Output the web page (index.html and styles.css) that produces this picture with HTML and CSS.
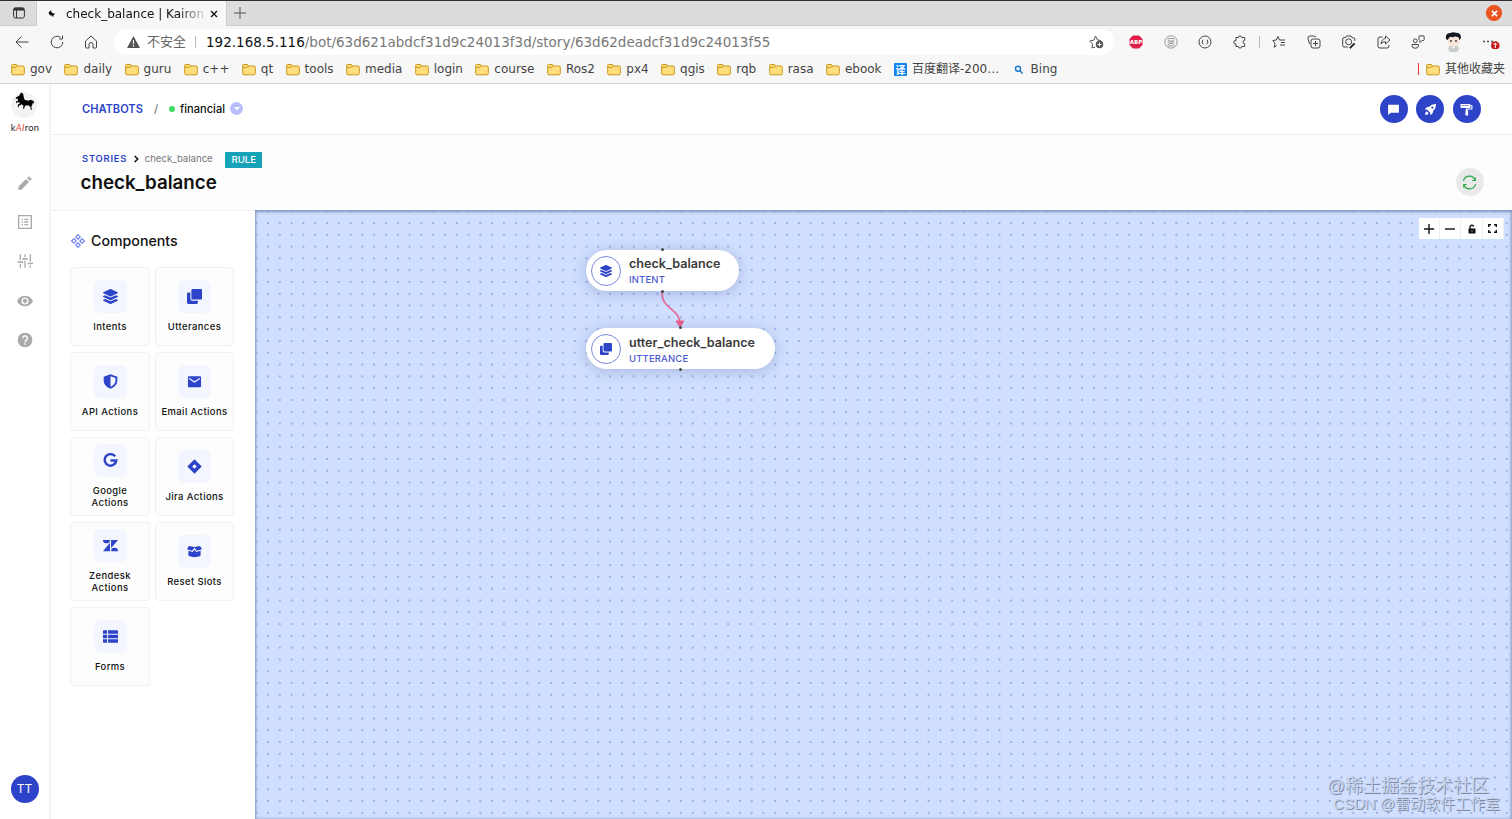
FILE: index.html
```html
<!DOCTYPE html>
<html lang="en">
  <head>
    <meta charset="UTF-8" />
    <meta name="viewport" content="width=device-width, initial-scale=1.0" />
    <title>check_balance | Kairon</title>
    <link rel="stylesheet" href="styles.css">
  </head>
  <body>
    <svg class="sprite">
      <symbol id="folder" viewBox="0 0 14 13">
        <path d="M1.5 1.5h4l1 1.5h5.5a1.3 1.3 0 0 1 1.3 1.3v6.2a1.3 1.3 0 0 1-1.3 1.3H2A1.3 1.3 0 0 1 .7 10.500V2.300a.8.8 0 0 1 .8-.8z" fill="#ffdf7d" stroke="#c9981a" />
        <path d="M1 4.300h4.300l1.300-1.300" fill="none" stroke="#c9981a" />
      </symbol>
      <symbol id="layers" viewBox="0 0 512 512">
        <path d="M12.400 148l232 105.700c6.800 3.100 16.400 3.100 23.200 0l232-105.700c16.500-7.500 16.500-32.600 0-40.100L267.600 2.300c-6.800-3.100-16.400-3.100-23.200 0L12.400 107.900c-16.500 7.500-16.500 32.600 0 40.100zM499.600 236.300l-58-26.300-161 73c-15 7-34 7-49.200 0L70.500 210l-58 26.300c-16.500 7.500-16.500 32.500 0 40l232 105.200c6.800 3.100 16.400 3.100 23.200 0l232-105.200c16.400-7.500 16.400-32.500 0-40zM499.600 364.100l-58-26.300-161 73c-15 7-34 7-49.200 0L70.500 338l-58 26.300c-16.500 7.500-16.500 32.500 0 40l232 105.200c6.800 3.100 16.400 3.100 23.200 0l232-105.200c16.400-7.500 16.400-32.500 0-40z" />
      </symbol>
      <symbol id="clone" viewBox="0 0 16 16">
        <rect x="4.700" y="0" width="11.300" height="11.300" rx="1.300" />
        <path d="M3.600 3.800H1.500A1.500 1.500 0 0 0 0 5.300v9.200A1.500 1.500 0 0 0 1.500 16h8.700a1.500 1.500 0 0 0 1.500-1.500v-2H5.500a1.900 1.900 0 0 1-1.900-1.900z" />
      </symbol>
    </svg>

    <div class="tabs">
      <div class="tab-menu">
        <svg width="12" height="12" viewBox="0 0 12 12" fill="none" stroke="#333"><rect x=".6" y=".8" width="10.800" height="10.200" rx="1.800" /><path d="M1 2.300h10" stroke-width="2.500" /><path d="M3.500 3v8" /></svg>
      </div>
      <div class="tab">
        <svg width="10" height="10" viewBox="0 0 10 10"><path d="M1.500 3.500L4 1.200l.8 2.600L8.500 5l-1.800.8L6 8.200 4.800 6.500 2.800 6.200z" fill="#111" /></svg>
        <span class="tab-title">check_balance | Kairon</span>
        <svg width="8" height="8" viewBox="0 0 8 8" stroke="#111" stroke-width="1.300"><path d="M1 1l6 6M7 1L1 7" /></svg>
      </div>
      <div class="tab-new">
        <svg width="12" height="12" viewBox="0 0 12 12" stroke="#555"><path d="M6 0v12M0 6h12" /></svg>
      </div>
      <div class="window-close">
        <svg width="7" height="7" viewBox="0 0 8 8" stroke="#fff" stroke-width="2"><path d="M1 1l6 6M7 1L1 7" /></svg>
      </div>
    </div>

    <div class="toolbar">
      <div class="nav-icons">
        <svg width="14" height="14" viewBox="0 0 14 14"><path d="M13.500 7H1M6.500 1.500L1 7l5.500 5.500" /></svg>
        <svg width="14" height="14" viewBox="0 0 14 14"><path d="M12.800 7A5.800 5.800 0 1 1 10.500 2.400M12.500.5v3.500H9" /></svg>
        <svg width="14" height="14" viewBox="0 0 14 14"><path d="M1.500 6L7 1l5.500 5v6.200a.8.8 0 0 1-.8.8H9V9.500a2 2 0 0 0-4 0V13H2.300a.8.8 0 0 1-.8-.8z" /></svg>
      </div>
      <div class="address">
        <svg width="13" height="12" viewBox="0 0 13 12"><path d="M6.500 0L13 12H0z" fill="#555" /><path d="M6.500 4v4M6.500 9v1.500" stroke="#fff" stroke-width="1.200" /></svg>
        <span class="insecure">不安全</span>
        <span class="divider"></span>
        <span class="url"><b>192.168.5.116</b>/bot/63d621abdcf31d9c24013f3d/story/63d62deadcf31d9c24013f55</span>
        <svg width="15" height="14" viewBox="0 0 15 14"><path d="M6 12l-3 1 .5-4L.8 6l4-.8L6.500 1l2 4 3.500.5" fill="none" stroke="#555" /><circle cx="10.500" cy="9.500" r="3.700" fill="#555" /><path d="M10.500 7.500v4M8.500 9.500h4" stroke="#fff" /></svg>
      </div>
      <div class="extensions">
        <svg width="14" height="14" viewBox="0 0 14 14"><path d="M4 .5h6L13.500 4v6L10 13.500H4L.5 10V4z" fill="#e01e4c" stroke="none" /><text x="7" y="9" class="abp">ABP</text></svg>
        <svg width="14" height="14" viewBox="0 0 14 14" class="faint"><circle cx="7" cy="7" r="6.200" /><path d="M3.500 4.500l2 1.500h3l2-1.500M3.500 10l2-1.500h3l2 1.500M3.500 7h7M4 3.500h6M4 11h6" /></svg>
        <svg width="14" height="14" viewBox="0 0 14 14"><circle cx="7" cy="7" r="6" /><path d="M5.300 4.800Q4.300 5 4.500 6T3.800 7Q4.500 7.200 4.500 8t.8 1.200M8.700 4.800q1 .2.800 1.200t.7 1q-.7.200-.7 1t-.8 1.200" /></svg>
        <svg width="14" height="14" viewBox="0 0 14 14"><path d="M3 2.500h2.500a1.600 1.600 0 0 1 3.200 0h3v2.800a1.700 1.700 0 1 0 0 3.400v2.800h-3a1.600 1.600 0 0 1-3.200 0H3V9a1.800 1.800 0 1 1 0-3.500z" /></svg>
        <span class="divider"></span>
        <svg width="14" height="14" viewBox="0 0 14 14"><path d="M4.500 10.500l-2.200 1.800.7-4L.8 5.500l3.500-.5L6 1.500 7.500 5H13M9 7.500h4M8 10h5" /></svg>
        <svg width="14" height="14" viewBox="0 0 14 14"><rect x="4" y="4" width="9" height="9" rx="2" /><path d="M8.500 6v5M6 8.500h5M2.500 9L1 3.500A2 2 0 0 1 2.500 1L7 1l2 1" /></svg>
        <svg width="14" height="14" viewBox="0 0 14 14"><path d="M6 12H2a1.300 1.300 0 0 1-1.300-1.300V4A1.300 1.300 0 0 1 2 2.700h1.500l1-1.700h4.500l1 1.700h1.500A1.300 1.300 0 0 1 12.800 4v2" /><circle cx="6.700" cy="6.800" r="3" /><path d="M7.500 12.500L12 8l1 1-4.500 4.500z" fill="#333" /></svg>
        <svg width="14" height="14" viewBox="0 0 14 14"><path d="M5.500 2H3a2 2 0 0 0-2 2v7a2 2 0 0 0 2 2h7a2 2 0 0 0 2-2v-1M8.500 1l4.500 4-4.500 4V6.700Q5.500 6.500 4 9q.5-5 4.500-5.500z" /></svg>
        <svg width="14" height="14" viewBox="0 0 14 14"><circle cx="4.300" cy="5.800" r="1.900" /><path d="M1 9.500h6.500v1.200a3.200 2.500 0 0 1-6.500 0zM8 1.500A1 1 0 0 1 9 .8h3a1.200 1.200 0 0 1 1.200 1.200v2.500a1 1 0 0 1-1 1H11L9 7.500V5.500L8 4.500z" /></svg>
        <svg class="avatar" width="17" height="20" viewBox="0 0 17 20" stroke="none"><path d="M4 14q4.500-3 9 0l1 3-2 3H5l-2-3z" fill="#c9cfc9" /><ellipse cx="8.500" cy="9" rx="5.800" ry="5.500" fill="#f9e5d7" /><path d="M1 7Q0 1 5.500 1 8-.5 11 .8q5 0 5 5l-1.500 2.500-1-3-3.500-.8-2 .8-3-.5L2.500 8z" fill="#151820" /><circle cx="6" cy="9" r=".9" fill="#333" /><circle cx="11" cy="9" r=".9" fill="#333" /><path d="M7 15l1.500 2 1.500-2" fill="#fff" /></svg>
        <svg class="more" width="18" height="14" viewBox="0 0 18 14" stroke="none"><g fill="#333"><circle cx="2" cy="6.500" r=".9" /><circle cx="6" cy="6.500" r=".9" /><circle cx="10" cy="6.500" r=".9" /></g><circle cx="13.300" cy="10.500" r="4.300" fill="#c4191b" /><path d="M13.300 13V8M11.500 9.800L13.300 8l1.800 1.800" stroke="#fff" fill="none" /></svg>
      </div>
    </div>

    <div class="bookmarks">
      <span><svg><use href="#folder" /></svg>gov</span>
      <span><svg><use href="#folder" /></svg>daily</span>
      <span><svg><use href="#folder" /></svg>guru</span>
      <span><svg><use href="#folder" /></svg>c++</span>
      <span><svg><use href="#folder" /></svg>qt</span>
      <span><svg><use href="#folder" /></svg>tools</span>
      <span><svg><use href="#folder" /></svg>media</span>
      <span><svg><use href="#folder" /></svg>login</span>
      <span><svg><use href="#folder" /></svg>course</span>
      <span><svg><use href="#folder" /></svg>Ros2</span>
      <span><svg><use href="#folder" /></svg>px4</span>
      <span><svg><use href="#folder" /></svg>qgis</span>
      <span><svg><use href="#folder" /></svg>rqb</span>
      <span><svg><use href="#folder" /></svg>rasa</span>
      <span><svg><use href="#folder" /></svg>ebook</span>
      <span class="cjk"><i class="translate">译</i>百度翻译-200…</span>
      <span><svg viewBox="0 0 14 13" fill="none" stroke="#1b74c8" stroke-width="1.400"><circle cx="6" cy="5.800" r="2.500" /><path d="M8 7.800l2.600 2.600" /></svg>Bing</span>
      <span class="cjk other"><svg><use href="#folder" /></svg>其他收藏夹</span>
    </div>

    <div class="app">
      <aside class="sidebar">
        <div class="logo">
          <div class="logo-mark">
            <svg width="20" height="20" viewBox="0 0 22 22"><path d="M5 3.500L6.500.500 9 2l.5 3 1 3.500 4 1 2.500-1 3.500 1.500.5 3.500-1.500-2-.5 2.500-1 2 .5 3.500h-1.200l-.3-3-2.500-2-3.500.5-1 3.500h-1.200l.5-3.500-2-1.500-3 1.500-.3 2L3 16l.5-2.500 2.500-1.500-3-1-1.800 1.500L1 10.500l2.500-1L2.500 7 .8 8 1 6l3-1.500z" /></svg>
          </div>
          <div class="logo-name">k<em>AI</em>ron</div>
        </div>
        <nav class="menu">
          <svg viewBox="0 0 24 24"><path d="M2 17.500V22h4.500L18 10.500 13.500 6zM21.500 7a1.200 1.200 0 0 0 0-1.600l-2.900-2.900a1.200 1.200 0 0 0-1.600 0l-2 2L19.500 9z" /></svg>
          <svg viewBox="0 0 24 24"><path d="M2.500 2.500h19v19h-19z" fill="none" stroke="#aaa" stroke-width="2" /><path d="M7 7h2v2H7zM7 11h2v2H7zM7 15h2v2H7zM11 7h6v2h-6zM11 11h6v2h-6zM11 15h6v2h-6z" /></svg>
          <svg viewBox="0 0 24 24"><path d="M4 2h2v9H4zM1 12.500h8v2.500H1zM4 16.500h2V22H4zM11 2h2v4h-2zM8 7.500h8V10H8zM11 11.500h2V22h-2zM19 2h2v11h-2zM16 14.500h8V17h-8zM19 18.500h2V22h-2z" /></svg>
          <svg viewBox="0 0 24 24"><path fill-rule="evenodd" d="M12 4C6.500 4 2 7.200 0 12c2 4.800 6.500 8 12 8s10-3.200 12-8c-2-4.800-6.500-8-12-8zM12 17.300a5.300 5.300 0 1 1 0-10.600 5.300 5.300 0 0 1 0 10.600zm0-8.500a3.200 3.200 0 1 0 0 6.400 3.200 3.200 0 0 0 0-6.400z" /></svg>
          <svg viewBox="0 0 24 24"><circle cx="12" cy="12" r="11" /><path d="M8.500 9.500a3.500 3.500 0 1 1 5.500 2.700Q12 13.500 12 15.300M12 17v2.200" fill="none" stroke="#fff" stroke-width="2.200" /></svg>
        </nav>
        <div class="user">TT</div>
      </aside>

      <main>
        <header class="topbar">
          <a class="crumb-root">CHATBOTS</a>
          <span class="slash">/</span>
          <span class="status"></span>
          <span class="bot-name">financial</span>
          <span class="dropdown"><svg width="6" height="4" viewBox="0 0 6 4"><path d="M0 0h6L3 3.500z" fill="#fff" /></svg></span>
          <div class="actions">
            <button><svg viewBox="0 0 24 24"><path d="M2 3h20v15H7l-5 4z" /></svg></button>
            <button><svg viewBox="0 0 24 24"><path fill-rule="evenodd" d="M22 2q-8-.5-12.500 5L5 8l-3.500 4 4.500.5 5.500 5.500.5 4.500 4-3.500 1-4.500Q22.500 10 22 2zM15.500 6.500a2 2 0 1 1 0 4 2 2 0 0 1 0-4zM4.500 15Q2 17 2 22q5 0 7-2.500z" /></svg></button>
            <button><svg viewBox="0 0 24 24"><path fill-rule="evenodd" d="M1 2h18v2h4v8h-9v2h1v9h-5v-9h1v-4h10V6h-2v3H1zM3 4v1h14V4z" /></svg></button>
          </div>
        </header>

        <section class="story-head">
          <div class="story-title">
            <div class="path">
              <a>STORIES</a>
              <svg width="5" height="8" viewBox="0 0 5 8" fill="none" stroke="#111" stroke-width="1.500"><path d="M.7 1l3 3-3 3" /></svg>
              <span>check_balance</span>
              <b class="badge">RULE</b>
            </div>
            <h1>check_balance</h1>
          </div>
          <button class="refresh">
            <svg width="15" height="15" viewBox="0 0 15 15" fill="none" stroke="#28a745" stroke-width="1.200"><path d="M1.500 6A6 6 0 0 1 13 5M13.500 9A6 6 0 0 1 2 10M13.300 2.500V5.500h-3M1.700 12.500v-3h3" /></svg>
          </button>
        </section>

        <div class="builder">
          <section class="components">
            <h2>
              <svg width="14" height="14" viewBox="0 0 14 14" fill="none" stroke="#6b78ee" stroke-width="1.100"><path d="M7 .6l2.300 2.300L7 5.200 4.700 2.900zM7 8.800l2.300 2.300L7 13.400l-2.300-2.300zM2.900 4.700L5.200 7 2.900 9.300.6 7zM11.100 4.700L13.400 7l-2.300 2.300L8.800 7z" /></svg>
              Components
            </h2>
            <div class="cards">
              <div class="card"><i><svg><use href="#layers" /></svg></i>Intents</div>
              <div class="card"><i><svg><use href="#clone" /></svg></i>Utterances</div>
              <div class="card"><i><svg viewBox="0 0 16 16"><path fill-rule="evenodd" d="M8 .3L15.300 3v4q0 6-7.300 8.800Q.7 13 .7 7V3zM8 2.300v11.300q5.300-2.400 5.300-6.600V4.300z" /></svg></i>API Actions</div>
              <div class="card"><i><svg viewBox="0 0 16 16"><path fill-rule="evenodd" d="M2 2.500h12a1 1 0 0 1 1 1v9.500a1 1 0 0 1-1 1H2a1 1 0 0 1-1-1V3.500a1 1 0 0 1 1-1zM2.300 4v1.500L8 9.200l5.700-3.700V4L8 7.700z" /></svg></i>Email Actions</div>
              <div class="card two-line"><i><svg viewBox="0 0 16 16"><path d="M13 3.600A6.200 6.200 0 1 0 14.200 8H8" fill="none" stroke="#2d43c8" stroke-width="2.500" /></svg></i>Google Actions</div>
              <div class="card"><i><svg viewBox="0 0 16 16"><path fill-rule="evenodd" d="M8 .3L15.700 8 8 15.700.3 8zM8 5.500L5.500 8 8 10.500 10.500 8z" /></svg></i>Jira Actions</div>
              <div class="card two-line"><i><svg viewBox="0 0 16 16"><path d="M0 2h7.400a3.700 3.700 0 0 1-7.400 0zM7.400 5v9H0zM8.600 14a3.700 3.700 0 0 1 7.400 0zM8.600 11V2H16z" /></svg></i>Zendesk Actions</div>
              <div class="card"><i><svg viewBox="0 0 16 16"><path d="M2 2.200l6 .9 6-.9 2 3.500-5.500 1.600L8 4 5.500 7.300 0 5.700zM1.500 7.300l4.600 1.300L8 6l1.900 2.600 4.600-1.300v4.500q0 1-1 1.300L8 14.200l-5.500-1.100q-1-.3-1-1.300z" /></svg></i>Reset Slots</div>
              <div class="card"><i><svg viewBox="0 0 16 16"><path d="M1 1.300h3.300v3.800H0V2.300a1 1 0 0 1 1-1zM5.400 1.300H15a1 1 0 0 1 1 1v2.800H5.400zM0 6.200h4.300v3.600H0zM5.400 6.200H16v3.600H5.400zM0 10.900h4.300v3.800H1a1 1 0 0 1-1-1zM5.400 10.900H16v2.800a1 1 0 0 1-1 1H5.400z" /></svg></i>Forms</div>
            </div>
          </section>

          <section class="canvas">
            <svg class="edge" width="30" height="40" viewBox="0 0 30 40"><path d="M4 2C4 19 22 17 22 33" fill="none" stroke="#ec6a9c" stroke-width="1.700" /><path d="M18 30h8l-4 6z" fill="#ec5f8f" stroke="#ec5f8f" /></svg>
            <div class="node intent">
              <i><svg><use href="#layers" /></svg></i>
              <div><strong>check_balance</strong><small>INTENT</small></div>
            </div>
            <div class="node utterance">
              <i><svg><use href="#clone" /></svg></i>
              <div><strong>utter_check_balance</strong><small>UTTERANCE</small></div>
            </div>
            <div class="controls">
              <span><svg width="10" height="10" viewBox="0 0 10 10"><path d="M5 0v10M0 5h10" /></svg></span>
              <span><svg width="10" height="10" viewBox="0 0 10 10"><path d="M0 5h10" /></svg></span>
              <span><svg width="8" height="10" viewBox="0 0 8 10"><rect x=".5" y="4.500" width="7" height="5" rx=".5" fill="#111" stroke="none" /><path d="M2 5V3a2 2 0 0 1 3.800-.6" /><circle cx="4" cy="7" r=".6" fill="#fff" stroke="none" /></svg></span>
              <span><svg width="9" height="9" viewBox="0 0 9 9"><path d="M.7 3V.7H3M6 .7h2.300V3M8.300 6v2.300H6M3 8.300H.7V6" /></svg></span>
            </div>
            <div class="watermark">
              <p class="community">@稀土掘金技术社区</p>
              <p class="author">CSDN @雷动软件工作室</p>
            </div>
          </section>
        </div>
      </main>
    </div>
  </body>
</html>
```
FILE: styles.css
```css
* {
  box-sizing: border-box;
}
body {
  margin: 0;
  height: 819px;
  overflow: hidden;
  display: flex;
  flex-direction: column;
  font-family: Inter, "Noto Sans CJK SC", sans-serif;
  background: #fff;
  color: #111;
}
svg {
  display: block;
  flex: none;
}
button {
  border: none;
  padding: 0;
  display: flex;
  align-items: center;
  justify-content: center;
}
.sprite {
  display: none;
}

/* browser frame */
.tabs,
.toolbar,
.bookmarks {
  font-family: "DejaVu Sans", "Noto Sans CJK SC", sans-serif;
  font-size: 12px;
  flex: none;
  display: flex;
  align-items: center;
  background: #f7f7f7;
}
.tabs {
  height: 26px;
  background: #dcdcdc;
  border-top: 1px solid #352c33;
}
.tab-menu {
  width: 37px;
  padding-left: 13px;
  height: 25px;
  display: flex;
  align-items: center;
  border-right: 1px solid #cdcdcd;
  border-bottom: 1px solid #cdcdcd;
}
.tab {
  width: 189px;
  height: 25px;
  padding-left: 10px;
  background: #f7f7f7;
  display: flex;
  align-items: center;
}
.tab-title {
  width: 137px;
  margin: 0 7px 0 9px;
  overflow: hidden;
  white-space: nowrap;
  mask-image: linear-gradient(90deg, #000 112px, rgba(0, 0, 0, 0.2));
}
.tab-new {
  flex: 1;
  height: 25px;
  padding-left: 7px;
  display: flex;
  align-items: center;
  border-left: 1px solid #cdcdcd;
  border-bottom: 1px solid #cdcdcd;
}
.window-close {
  width: 27px;
  height: 25px;
  border-bottom: 1px solid #cdcdcd;
  background: radial-gradient(circle at 9px 12px, #e95420 7.500px, transparent 8.500px);
  padding: 9px 0 0 5.500px;
}
.toolbar {
  height: 32px;
}
.nav-icons {
  width: 114px;
  padding-left: 15px;
  display: flex;
  gap: 20.500px;
  fill: none;
  stroke: #444;
}
.address {
  width: 1000px;
  height: 26px;
  padding: 0 10px 0 13px;
  border-radius: 13px;
  background: #fff;
  display: flex;
  align-items: center;
}
.insecure {
  margin: -3px 0 0 7px;
  width: 40px;
  font-size: 13px;
  color: #666;
}
.divider {
  width: 1px;
  height: 12px;
  margin: 0 10px 0 8px;
  background: #bbb;
}
.url {
  flex: 1;
  font-size: 13.500px;
  color: #777;
}
.url b {
  font-weight: normal;
  color: #111;
}
.extensions {
  flex: 1;
  padding-left: 15px;
  display: flex;
  align-items: center;
  gap: 20.700px;
  fill: none;
  stroke: #444;
}
.extensions .divider {
  margin: 0 -8.500px;
}
.extensions .faint {
  stroke: #999;
}
.extensions .avatar {
  margin: 0 -1px 0 -1px;
}
.abp {
  font: bold 5.500px "DejaVu Sans", sans-serif;
  text-anchor: middle;
  fill: #fff;
  stroke: none;
}
.bookmarks {
  height: 26px;
  padding: 0 7px 3px 11px;
  gap: 12.400px;
  border-bottom: 1px solid #d2d2d2;
  color: #444;
}
.bookmarks span {
  display: flex;
  align-items: center;
  gap: 5px;
  white-space: nowrap;
}
.bookmarks svg {
  width: 14px;
  height: 13px;
}
.bookmarks .cjk {
  line-height: 14px;
}
.bookmarks .other {
  margin-left: auto;
  padding-left: 8px;
  background: linear-gradient(#e33, #e33) left / 1px 12px no-repeat;
}
.translate {
  width: 13px;
  height: 13px;
  border-radius: 1px;
  background: #1384f0;
  color: #fff;
  font: bold 10px/13px "Noto Sans CJK SC", sans-serif;
  text-align: center;
}

/* sidebar */
.app {
  flex: 1;
  min-height: 0;
  display: flex;
}
.sidebar {
  width: 51px;
  border-right: 2px solid #f4f4f5;
  display: flex;
  flex-direction: column;
  align-items: center;
  padding: 8px 0 16px;
}
.logo-mark {
  width: 26px;
  height: 26px;
  margin: 0 auto;
  border-radius: 50%;
  background: #f3f3f5;
}
.logo-mark svg {
  margin-left: 4px;
}
.logo-name {
  margin-top: 4px;
  padding-left: 1px;
  font: 9.300px/11px Lato, sans-serif;
  letter-spacing: 0.300px;
  color: #222;
}
.logo-name em {
  color: #e0492f;
}
.menu {
  margin-top: 41.500px;
  display: flex;
  flex-direction: column;
  gap: 23.400px;
}
.menu svg {
  width: 16px;
  height: 16px;
  fill: #aaa;
}
.user {
  margin-top: auto;
  width: 28px;
  height: 28px;
  border-radius: 50%;
  background: #2d43c8;
  color: #fff;
  font-size: 12px;
  line-height: 28px;
  text-align: center;
}

/* header */
main {
  flex: 1;
  min-width: 0;
  display: flex;
  flex-direction: column;
}
.topbar {
  height: 51px;
  padding: 0 31.500px 0 31px;
  border-bottom: 1px solid #eee;
  display: flex;
  align-items: center;
  font-size: 11.100px;
  line-height: 14px;
  font-weight: 500;
}
.crumb-root {
  font-weight: 600;
  color: #2d43c8;
}
.crumb-root,
.bot-name {
  margin-top: -1px;
}
.slash {
  margin: 0 11px;
  color: #777;
}
.status {
  width: 6px;
  height: 6px;
  margin-right: 5px;
  border-radius: 50%;
  background: #3ddc63;
}
.dropdown {
  width: 13px;
  height: 13px;
  margin: -1px 0 0 5px;
  border-radius: 50%;
  background: #b9bdfb;
  display: flex;
  align-items: center;
  justify-content: center;
}
.actions {
  margin-left: auto;
  display: flex;
  gap: 8.300px;
}
.actions button {
  width: 28px;
  height: 28px;
  border-radius: 50%;
  background: #2d43c8;
}
.actions svg {
  width: 13px;
  height: 13px;
  fill: #fff;
}
.story-head {
  height: 75px;
  padding: 16px 28.500px 0 29.500px;
  background: #fdfdfd;
  display: flex;
  justify-content: space-between;
}
.path {
  height: 16px;
  padding-left: 1.500px;
  display: flex;
  align-items: center;
  font-size: 9.600px;
  line-height: 14px;
  color: #777;
}
.path a {
  font-size: 9.450px;
  font-weight: 600;
  letter-spacing: 0.750px;
  color: #2d43c8;
}
.path a,
.path span {
  margin-top: -1px;
}
.path svg {
  margin: 0 6px 0 6.500px;
}
.badge {
  margin: 2px 0 0 12.500px;
  width: 37px;
  height: 16px;
  border-radius: 1px;
  background: #17a2b8;
  color: #fff;
  font-weight: 500;
  line-height: 16px;
  text-align: center;
}
.story-head h1 {
  margin: 3.500px 0 0;
  font-size: 18.750px;
  line-height: 24px;
  font-weight: 600;
}
.refresh {
  width: 28px;
  height: 28px;
  margin-top: 17px;
  border-radius: 50%;
  background: #e9e9e9;
}

/* story builder */
.builder {
  flex: 1;
  min-height: 0;
  display: flex;
}
.components {
  width: 204px;
  padding: 21px 19px 21px 20px;
  border-top: 1px solid #eee;
}
.components h2 {
  margin: 0;
  font-size: 14.200px;
  line-height: 18px;
  font-weight: 500;
  display: flex;
  align-items: center;
  gap: 6px;
}
.cards {
  margin-top: 17px;
  margin-left: -1px;
  display: grid;
  grid-template-columns: 80px 79px;
  grid-auto-rows: 79px;
  gap: 6px 5px;
}
.card {
  padding: 0 5px 1px;
  border: 1px solid #f1f1f2;
  border-radius: 4px;
  background: #fdfdfd;
  display: flex;
  flex-direction: column;
  align-items: center;
  justify-content: center;
  gap: 8px;
  font-size: 9.450px;
  line-height: 12px;
  font-weight: 500;
  letter-spacing: 0.400px;
  text-align: center;
}
.two-line {
  padding-bottom: 0;
}
.card i {
  width: 33px;
  height: 33px;
  border-radius: 6px;
  background: #f4f6ff;
  display: flex;
  align-items: center;
  justify-content: center;
}
.card svg {
  width: 15px;
  height: 15px;
  fill: #2d43c8;
}
.canvas {
  flex: 1;
  position: relative;
  background: radial-gradient(circle, #94a8db 0.600px, transparent 1.300px) 7.100px 7.100px / 11.811px 11.811px, #d0dfff;
  box-shadow: inset 1px 2px 3px #8798c4, inset -1px 0 3px #8798c4;
}
.node {
  position: absolute;
  left: 331px;
  height: 41px;
  padding: 1px 19px 0 5px;
  border-radius: 21px;
  background: #fff;
  box-shadow: 0 2px 14px rgba(60, 75, 130, 0.28);
  display: flex;
  align-items: center;
  gap: 8px;
  white-space: nowrap;
}
/* connection handles */
.node::before,
.node::after {
  content: "";
  position: absolute;
  left: calc(50% - 1.500px);
  width: 3px;
  height: 3px;
  border-radius: 50%;
  background: #444;
}
.node::before {
  top: -2px;
}
.node::after {
  bottom: -2px;
}
.intent {
  top: 39.500px;
  width: 153px;
}
.utterance {
  top: 118px;
  width: 189px;
}
.node i {
  width: 30px;
  height: 30px;
  flex: none;
  border: 1px solid #7c86df;
  border-radius: 50%;
  display: flex;
  align-items: center;
  justify-content: center;
}
.node svg {
  width: 12px;
  height: 12px;
  fill: #2d43c8;
}
.node strong,
.node small {
  display: block;
}
.node strong {
  font-size: 12.600px;
  line-height: 17px;
  font-weight: 600;
  color: #3a3a3a;
}
.node small {
  margin-top: 1px;
  font-size: 9.450px;
  line-height: 13px;
  font-weight: 500;
  letter-spacing: 0.200px;
  color: #4c58cf;
}
.edge {
  position: absolute;
  left: 403px;
  top: 81px;
}
.controls {
  position: absolute;
  right: 8px;
  top: 8px;
  display: flex;
  background: #fff;
}
.controls span {
  width: 21.300px;
  height: 21px;
  border-right: 1px solid #f0f0f0;
  display: flex;
  align-items: center;
  justify-content: center;
}
.controls svg {
  fill: none;
  stroke: #111;
  stroke-width: 1.400;
}
.watermark {
  position: absolute;
  right: 12px;
  bottom: 7px;
  color: #c9d4ec;
  font-family: "Liberation Sans", "Noto Sans CJK SC", sans-serif;
  text-shadow: 1px 1px 0 #7e8ba5;
}
.watermark p {
  margin: 0;
  text-align: right;
}
.community {
  font-size: 18px;
  line-height: 18px;
  padding-right: 11px;
}
.author {
  font-size: 15px;
  line-height: 17px;
}
```
